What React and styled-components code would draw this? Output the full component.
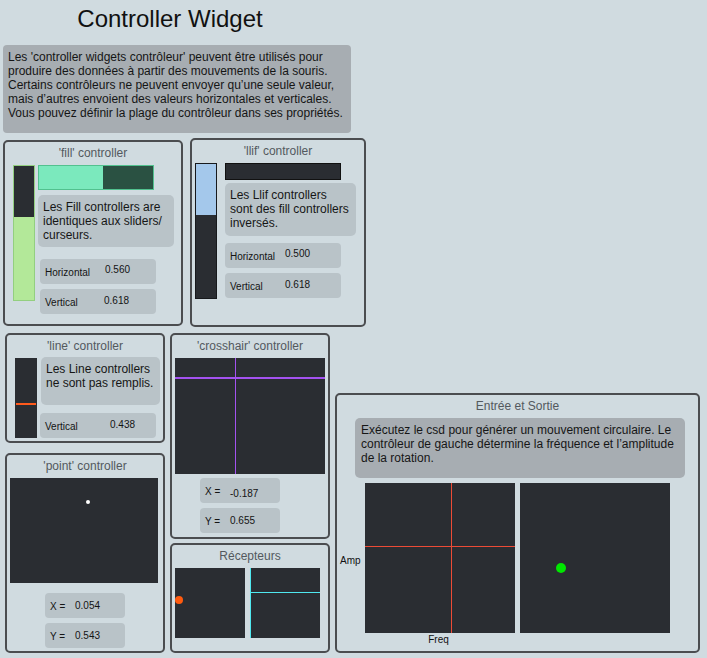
import React from 'react'
import styled, { createGlobalStyle } from 'styled-components'

const Global = createGlobalStyle`
  html, body { margin: 0; padding: 0; background: #d0dbe0; }
  body { font-family: "Liberation Sans", Arial, sans-serif; }
`

const Page = styled.div`
  width: 707px;
  height: 658px;
  background: #d0dbe0;
  overflow: hidden;
  color: #151515;
`

const Title = styled.h1`
  margin: 0;
  padding-top: 5px;
  width: 340px;
  text-align: center;
  font-size: 24px;
  line-height: 28px;
  font-weight: 400;
  color: #111;
`

const Intro = styled.div`
  margin: 12px 0 0 3px;
  width: 348px;
  height: 88px;
  box-sizing: border-box;
  padding: 5px;
  background: #a7adb2;
  border-radius: 4px;
  font-size: 12px;
  line-height: 14px;
`

const Row = styled.div`
  display: flex;
  align-items: flex-start;
  gap: ${p => p.$gap}px;
  margin-top: ${p => p.$top}px;
  padding-left: ${p => p.$left}px;
`

const Col = styled.div`
  display: flex;
  flex-direction: column;
  gap: ${p => p.$gap}px;
  align-self: ${p => p.$end ? 'flex-end' : 'flex-start'};
`

const Group = styled.div`
  width: ${p => p.$w}px;
  height: ${p => p.$h}px;
  margin-top: ${p => p.$mt || 0}px;
  box-sizing: border-box;
  border: 2px solid #4b4d50;
  border-radius: 5px;
  flex-shrink: 0;
`

const GroupTitle = styled.div`
  padding-top: 4px;
  height: 14px;
  font-size: 12px;
  line-height: 14px;
  text-align: center;
  color: #53595e;
`

const Body = styled.div`
  display: flex;
  flex-direction: ${p => p.$column ? 'column' : 'row'};
  align-items: flex-start;
  margin-top: 5px;
  padding-left: ${p => p.$pl}px;
`

const Stack = styled.div`
  display: flex;
  flex-direction: column;
  align-items: flex-start;
  margin-left: ${p => p.$ml}px;
`

const VSlider = styled.div`
  width: 22px;
  height: ${p => p.$h}px;
  box-sizing: border-box;
  border: 1px solid ${p => p.$border};
  background: #2a2d32;
  display: flex;
  flex-direction: column;
  justify-content: ${p => p.$fromTop ? 'flex-start' : 'flex-end'};
  position: relative;
`

const VFill = styled.div`
  width: 100%;
  background: ${p => p.$color};
`

const LineMark = styled.div`
  position: absolute;
  left: 0;
  right: 0;
  height: 2px;
  background: #ff5a1c;
`

const HSlider = styled.div`
  width: 116px;
  height: ${p => p.$h}px;
  box-sizing: border-box;
  border: 1px solid ${p => p.$border};
  background: ${p => p.$bg};
  display: flex;
`

const HFill = styled.div`
  height: 100%;
  background: ${p => p.$color};
`

const Note = styled.div`
  width: ${p => p.$w}px;
  height: ${p => p.$h}px;
  margin-top: ${p => p.$mt}px;
  margin-left: ${p => p.$ml || 0}px;
  box-sizing: border-box;
  padding: 5px ${p => p.$px || 5}px;
  background: ${p => p.$dark ? '#a7adb2' : '#b9c3c8'};
  border-radius: 5px;
  font-size: 12px;
  line-height: 14px;
  color: #161616;
`

const ValueBox = styled.div`
  width: ${p => p.$w}px;
  height: 25px;
  margin-top: ${p => p.$mt}px;
  margin-left: ${p => p.$ml || 0}px;
  box-sizing: border-box;
  padding-left: 5px;
  display: flex;
  align-items: center;
  background: #b9c3c8;
  border-radius: 4px;
  font-size: 10px;
  color: #141414;
`

const ValueLabel = styled.span`
  width: ${p => p.$lw - 5}px;
  flex-shrink: 0;
  padding-top: 2px;
`

const ValueNum = styled.span`
  padding-top: ${p => p.$dy > 0 ? p.$dy * 2 : 0}px;
  padding-bottom: ${p => p.$dy < 0 ? -p.$dy * 2 : 0}px;
`

const Pad = styled.div`
  position: relative;
  width: ${p => p.$w}px;
  height: ${p => p.$h}px;
  margin-left: ${p => p.$ml || 0}px;
  background: #2a2d32;
  overflow: hidden;
  flex-shrink: 0;
`

const HLine = styled.div`
  position: absolute;
  left: 0;
  right: 0;
  height: ${p => p.$t || 1}px;
  background: ${p => p.$color};
`

const VLine = styled.div`
  position: absolute;
  top: 0;
  bottom: 0;
  width: ${p => p.$t || 1}px;
  background: ${p => p.$color};
`

const Dot = styled.div`
  position: absolute;
  width: ${p => p.$r * 2}px;
  height: ${p => p.$r * 2}px;
  margin: -${p => p.$r}px 0 0 -${p => p.$r}px;
  border-radius: 50%;
  background: ${p => p.$color};
`

const PadsRow = styled.div`
  display: flex;
  align-items: flex-start;
  margin-top: 5px;
`

const AxisSide = styled.div`
  width: 28px;
  height: 150px;
  display: flex;
  align-items: center;
  padding-top: 4px;
  box-sizing: border-box;
  padding-left: 3px;
  font-size: 10px;
  color: #111;
`

const PadCol = styled.div`
  display: flex;
  flex-direction: column;
  align-items: center;
  margin-left: ${p => p.$ml || 0}px;
`

const AxisBottom = styled.div`
  font-size: 10px;
  line-height: 12px;
  margin-top: 1px;
  padding-right: 3px;
  color: #111;
`

const Value = ({ w, mt, ml, lw, label, value, dy = 0 }) => (
  <ValueBox $w={w} $mt={mt} $ml={ml}>
    <ValueLabel $lw={lw}>{label}</ValueLabel>
    <ValueNum $dy={dy}>{value}</ValueNum>
  </ValueBox>
)

export default function App() {
  return (
    <Page>
      <Global />
      <Title>Controller Widget</Title>
      <Intro>
        Les 'controller widgets contrôleur' peuvent être utilisés pour produire des données à partir des mouvements de la souris. Certains contrôleurs ne peuvent envoyer qu’une seule valeur, mais d’autres envoient des valeurs horizontales et verticales. Vous pouvez définir la plage du contrôleur dans ses propriétés.
      </Intro>

      <Row $top={5} $left={3} $gap={7}>
        <Group $w={180} $h={186} $mt={2}>
          <GroupTitle>'fill' controller</GroupTitle>
          <Body $pl={8}>
            <VSlider $h={136} $border="#93cf80">
              <VFill $color="#b3e899" style={{ height: '61.8%' }} />
            </VSlider>
            <Stack $ml={3}>
              <HSlider $h={25} $border="#52c18f" $bg="#2a5142">
                <HFill $color="#7be9bd" style={{ width: '56%' }} />
              </HSlider>
              <Note $w={136} $h={52} $mt={5}>Les Fill controllers are identiques aux sliders/ curseurs.</Note>
              <Value w={116} mt={12} ml={2} lw={65} label="Horizontal" value="0.560" dy={-2} />
              <Value w={116} mt={5} ml={2} lw={64} label="Vertical" value="0.618" dy={-1} />
            </Stack>
          </Body>
        </Group>

        <Group $w={176} $h={189}>
          <GroupTitle>'llif' controller</GroupTitle>
          <Body $pl={3}>
            <VSlider $h={136} $border="#17191c" $fromTop>
              <VFill $color="#a4c8eb" style={{ height: '38.2%' }} />
            </VSlider>
            <Stack $ml={8}>
              <HSlider $h={17} $border="#111" $bg="#2a2d32" />
              <Note $w={131} $h={53} $mt={3}>Les Llif controllers sont des fill controllers inversés.</Note>
              <Value w={116} mt={7} lw={60} label="Horizontal" value="0.500" dy={-2} />
              <Value w={116} mt={5} lw={60} label="Vertical" value="0.618" dy={-1} />
            </Stack>
          </Body>
        </Group>
      </Row>

      <Row $top={6} $left={5} $gap={5}>
        <Col $gap={10}>
          <Group $w={160} $h={110}>
            <GroupTitle>'line' controller</GroupTitle>
            <Body $pl={8}>
              <VSlider $h={80} $border="#2a2d32">
                <LineMark style={{ top: '44px' }} />
              </VSlider>
              <Stack $ml={4}>
                <Note $w={119} $h={48} $mt={-1}>Les Line controllers ne sont pas remplis.</Note>
                <Value w={116} mt={8} ml={-1} lw={70} label="Vertical" value="0.438" dy={-1} />
              </Stack>
            </Body>
          </Group>

          <Group $w={160} $h={200}>
            <GroupTitle>'point' controller</GroupTitle>
            <Body $pl={3} $column>
              <Pad $w={148} $h={105}>
                <Dot $r={2} $color="#ffffff" style={{ left: '78px', top: '24px' }} />
              </Pad>
              <Value w={80} mt={10} ml={35} lw={30} label="X =" value="0.054" />
              <Value w={80} mt={5} ml={35} lw={30} label="Y =" value="0.543" />
            </Body>
          </Group>
        </Col>

        <Col $gap={4}>
          <Group $w={160} $h={206}>
            <GroupTitle>'crosshair' controller</GroupTitle>
            <Body $pl={3} $column>
              <Pad $w={150} $h={116}>
                <HLine $color="#a352f0" $t={2} style={{ top: '19px' }} />
                <VLine $color="#a352f0" style={{ left: '60px' }} />
              </Pad>
              <Value w={80} mt={4} ml={25} lw={30} label="X =" value="-0.187" dy={3} />
              <Value w={80} mt={5} ml={25} lw={30} label="Y =" value="0.655" />
            </Body>
          </Group>

          <Group $w={160} $h={110}>
            <GroupTitle>Récepteurs</GroupTitle>
            <Body $pl={3}>
              <Pad $w={70} $h={70}>
                <Dot $r={4} $color="#ff5a0e" style={{ left: '4px', top: '32px' }} />
              </Pad>
              <Pad $w={70} $h={70} $ml={5}>
                <HLine $color="#4fe8ef" style={{ top: '24px' }} />
                <VLine $color="#4fe8ef" style={{ left: '0px' }} />
              </Pad>
            </Body>
          </Group>
        </Col>

        <Col $end>
          <Group $w={365} $h={260}>
            <GroupTitle>Entrée et Sortie</GroupTitle>
            <Note $w={330} $h={60} $mt={5} $ml={18} $px={6} $dark>
              Exécutez le csd pour générer un mouvement circulaire. Le contrôleur de gauche détermine la fréquence et l’amplitude de la rotation.
            </Note>
            <PadsRow>
              <AxisSide>Amp</AxisSide>
              <PadCol>
                <Pad $w={150} $h={150}>
                  <HLine $color="#ec4b36" style={{ top: '63px' }} />
                  <VLine $color="#ec4b36" style={{ left: '86px' }} />
                </Pad>
                <AxisBottom>Freq</AxisBottom>
              </PadCol>
              <PadCol $ml={5}>
                <Pad $w={150} $h={150}>
                  <Dot $r={5} $color="#00e600" style={{ left: '41px', top: '85px' }} />
                </Pad>
              </PadCol>
            </PadsRow>
          </Group>
        </Col>
      </Row>
    </Page>
  )
}
